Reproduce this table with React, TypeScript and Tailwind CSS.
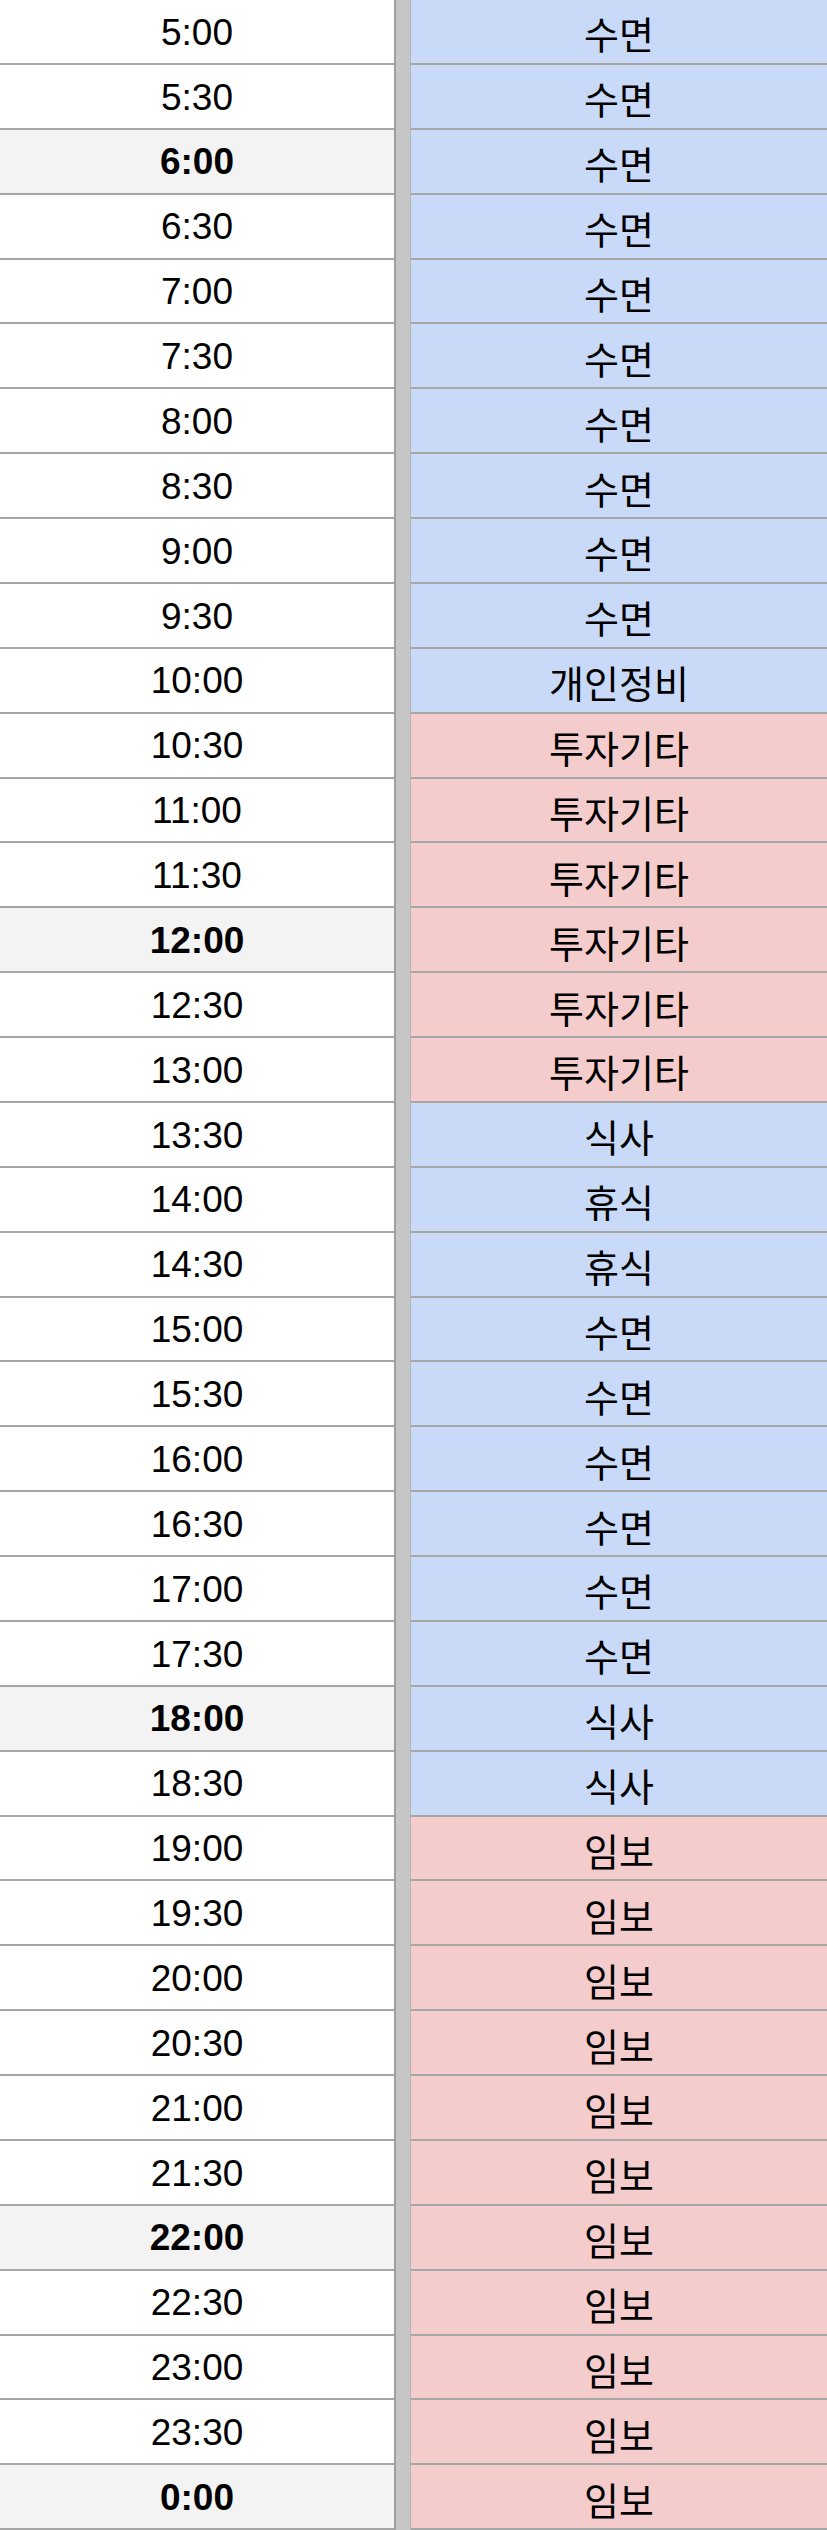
type Row = { time: string; task: string; color: "blue" | "red"; bold?: boolean }

const rows: Row[] = [
  { time: "5:00", task: "수면", color: "blue" },
  { time: "5:30", task: "수면", color: "blue" },
  { time: "6:00", task: "수면", color: "blue", bold: true },
  { time: "6:30", task: "수면", color: "blue" },
  { time: "7:00", task: "수면", color: "blue" },
  { time: "7:30", task: "수면", color: "blue" },
  { time: "8:00", task: "수면", color: "blue" },
  { time: "8:30", task: "수면", color: "blue" },
  { time: "9:00", task: "수면", color: "blue" },
  { time: "9:30", task: "수면", color: "blue" },
  { time: "10:00", task: "개인정비", color: "blue" },
  { time: "10:30", task: "투자기타", color: "red" },
  { time: "11:00", task: "투자기타", color: "red" },
  { time: "11:30", task: "투자기타", color: "red" },
  { time: "12:00", task: "투자기타", color: "red", bold: true },
  { time: "12:30", task: "투자기타", color: "red" },
  { time: "13:00", task: "투자기타", color: "red" },
  { time: "13:30", task: "식사", color: "blue" },
  { time: "14:00", task: "휴식", color: "blue" },
  { time: "14:30", task: "휴식", color: "blue" },
  { time: "15:00", task: "수면", color: "blue" },
  { time: "15:30", task: "수면", color: "blue" },
  { time: "16:00", task: "수면", color: "blue" },
  { time: "16:30", task: "수면", color: "blue" },
  { time: "17:00", task: "수면", color: "blue" },
  { time: "17:30", task: "수면", color: "blue" },
  { time: "18:00", task: "식사", color: "blue", bold: true },
  { time: "18:30", task: "식사", color: "blue" },
  { time: "19:00", task: "임보", color: "red" },
  { time: "19:30", task: "임보", color: "red" },
  { time: "20:00", task: "임보", color: "red" },
  { time: "20:30", task: "임보", color: "red" },
  { time: "21:00", task: "임보", color: "red" },
  { time: "21:30", task: "임보", color: "red" },
  { time: "22:00", task: "임보", color: "red", bold: true },
  { time: "22:30", task: "임보", color: "red" },
  { time: "23:00", task: "임보", color: "red" },
  { time: "23:30", task: "임보", color: "red" },
  { time: "0:00", task: "임보", color: "red", bold: true },
]

export default function App() {
  return (
    <div className="flex h-[2530px] w-[827px] flex-col bg-white text-black">
      {rows.map((row) => (
        <div key={row.time} className="flex min-h-0 flex-1">
          {/* time cell */}
          <div
            className={
              row.bold
                ? "flex w-[394px] items-center justify-center border-b-2 border-[#a6a6a6] bg-[#f3f3f3] pt-[2px] font-['Liberation_Sans',Arial,sans-serif] text-[37px] font-bold"
                : "flex w-[394px] items-center justify-center border-b-2 border-[#a6a6a6] bg-white pt-[2px] font-['Liberation_Sans',Arial,sans-serif] text-[37px]"
            }
          >
            {row.time}
          </div>
          {/* frozen column divider */}
          <div className="w-[17px] border-l-2 border-r border-l-[#9f9f9f] border-r-[#b4b4b4] bg-[#c6c6c6]" />
          {/* activity cell */}
          <div
            className={
              row.color === "blue"
                ? "flex flex-1 items-center justify-center border-b-2 border-[#a6a6a6] bg-[#c9daf8] pt-[3px] font-['Noto_Sans_CJK_KR','Noto_Sans',sans-serif] text-[38px]"
                : "flex flex-1 items-center justify-center border-b-2 border-[#a6a6a6] bg-[#f4cccc] pt-[3px] font-['Noto_Sans_CJK_KR','Noto_Sans',sans-serif] text-[38px]"
            }
          >
            {row.task}
          </div>
        </div>
      ))}
    </div>
  )
}
